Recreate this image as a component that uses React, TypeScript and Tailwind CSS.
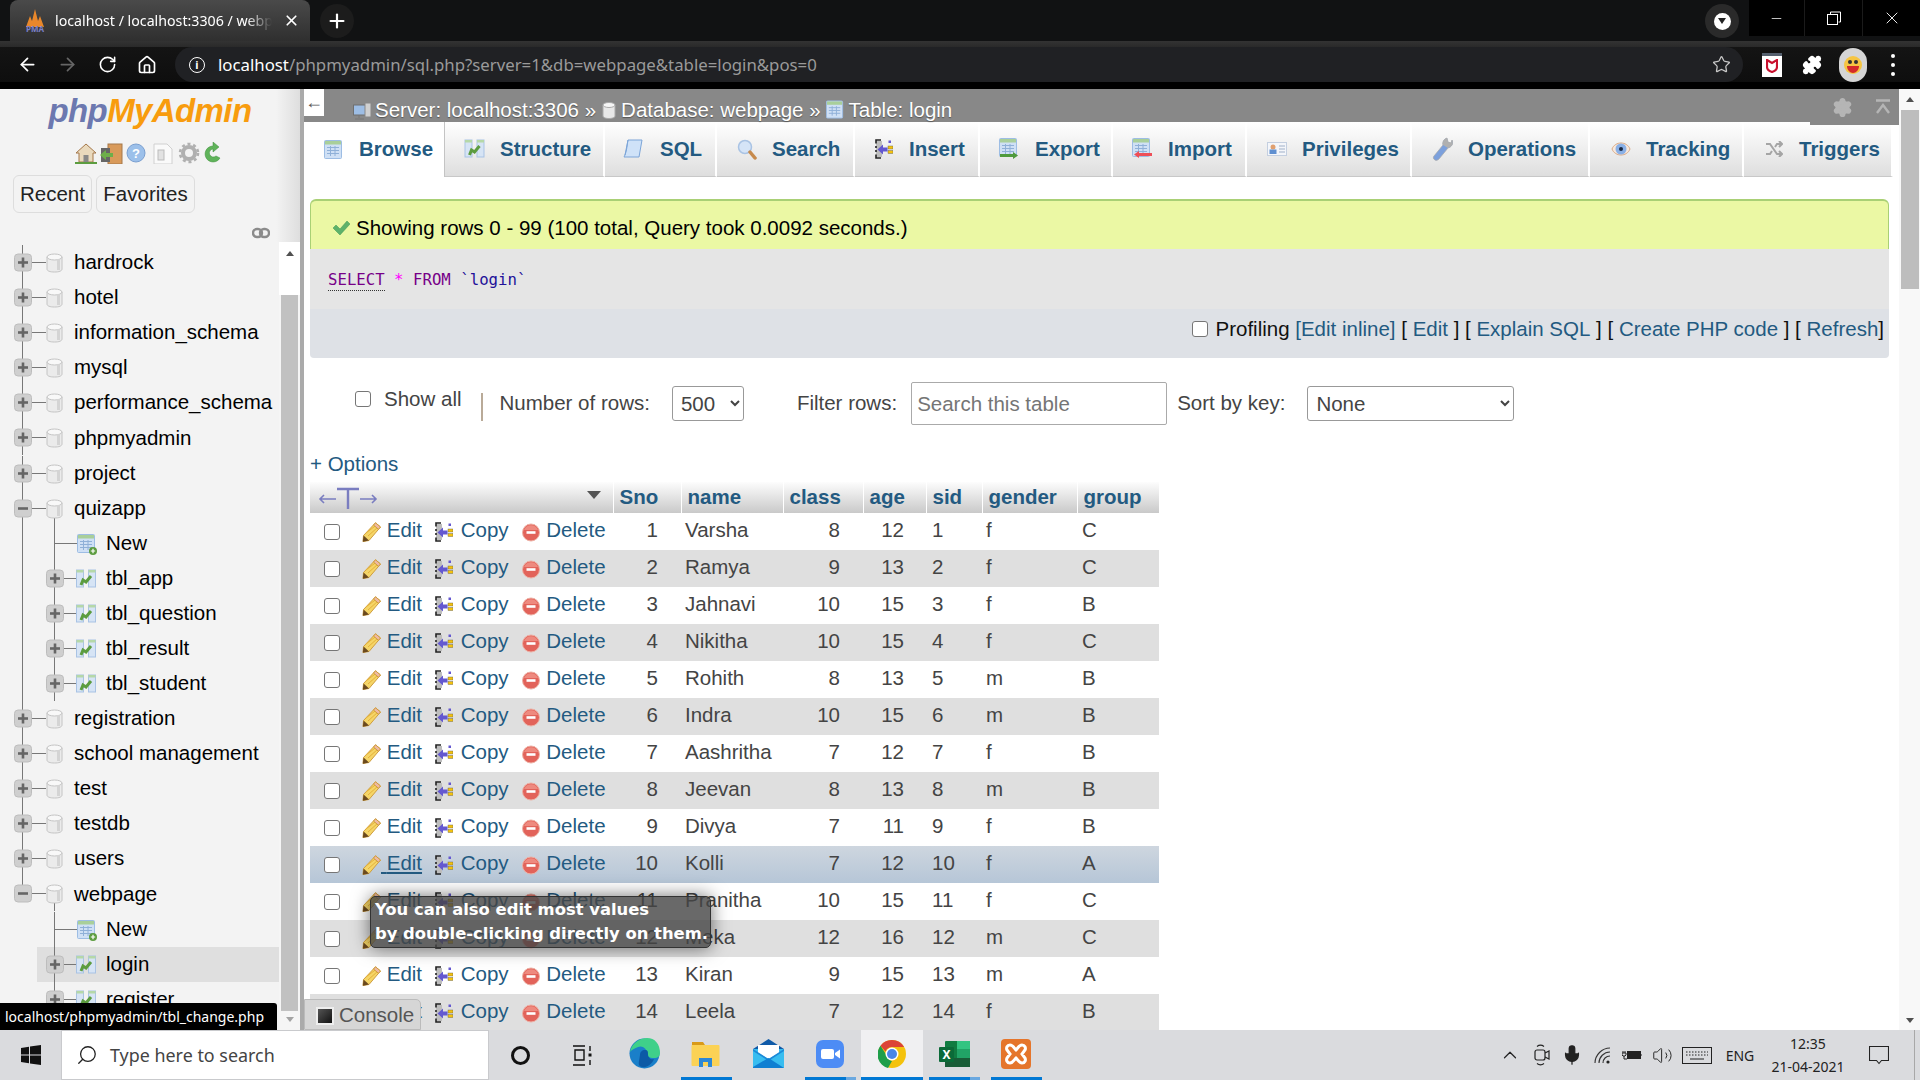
import React from 'react';
import { ArrowLeft, ArrowRight, RotateCw, House, Star, Plus, X, Minus, Search as SearchIcon, ChevronUp, Settings, Puzzle, Mic, Volume2 } from 'lucide-react';

const LINK = 'text-[#235a81]';

const TreeBox = ({ x, open }: { x: number; open?: boolean }) => (
  <g>
    <rect x={x + 0.5} y={9} width={17} height={17} rx={3.5} fill="#cfcfcf" stroke="#bdbdbd" />
    <rect x={x + 4} y={16.2} width={10} height={2.6} fill="#666" />
    {!open && <rect x={x + 7.7} y={12.5} width={2.6} height={10} fill="#666" />}
  </g>
);

const DbGlyph = ({ x }: { x: number }) => (
  <g>
    <path d={`M${x} 12v12c0 2 3 3 7.5 3s7.5-1 7.5-3V12z`} fill="#ebebeb" stroke="#c4c4c4" />
    <ellipse cx={x + 7.5} cy={12} rx={7.5} ry={3} fill="#f8f8f8" stroke="#c4c4c4" />
    <rect x={x + 10} y={14} width={3} height={11} fill="#d4d4d4" />
  </g>
);

const StructGlyph = ({ x, y = 8 }: { x: number; y?: number }) => (
  <g transform={`translate(${x} ${y})`}>
    <rect x={0.5} y={1} width={7} height={17} fill="#d6e4f5" stroke="#a9c3e4" />
    <rect x={12.5} y={1} width={7} height={17} fill="#d6e4f5" stroke="#a9c3e4" />
    <rect x={0.5} y={1} width={7} height={2.5} fill="#b5d8a8" />
    <rect x={12.5} y={1} width={7} height={2.5} fill="#b5d8a8" />
    <path d="M5 16l2-5 3 2 5-6" fill="none" stroke="#5c9c3f" strokeWidth={3} />
  </g>
);

const TableGlyph = ({ x, y = 8, badge }: { x: number; y?: number; badge?: string }) => (
  <g transform={`translate(${x} ${y})`}>
    <rect x={0.5} y={0.5} width={17} height={18} rx={1} fill="#cfe0f5" stroke="#9dbde4" />
    <rect x={1} y={1} width={16} height={3.5} fill="#a9cf9a" />
    <path d="M3 7.5h12M3 10.5h12M3 13.5h12M6.5 6v10M11 6v10" stroke="#8fb0d8" strokeWidth={1} />
    {badge === 'new' && (
      <g>
        <circle cx={16} cy={17} r={4} fill="#5c9c3f" />
        <path d="M13.8 17h4.4M16 14.8v4.4" stroke="#fff" strokeWidth={1.2} />
      </g>
    )}
    {badge === 'export' && <path d="M1 16h13v-2l5 3.5-5 3.5v-2H1z" fill="#4f9a3d" />}
    {badge === 'import' && <path d="M20 15H7v-2l-5 3.5 5 3.5v-2h13z" fill="#ee4f58" />}
  </g>
);

type Row = { label: string; depth: 0 | 1; kind?: 'new' | 'table'; open?: boolean; last?: boolean; outerDone?: boolean; selected?: boolean };

const treeRows: Row[] = [
  { label: 'hardrock', depth: 0 },
  { label: 'hotel', depth: 0 },
  { label: 'information_schema', depth: 0 },
  { label: 'mysql', depth: 0 },
  { label: 'performance_schema', depth: 0 },
  { label: 'phpmyadmin', depth: 0 },
  { label: 'project', depth: 0 },
  { label: 'quizapp', depth: 0, open: true },
  { label: 'New', depth: 1, kind: 'new' },
  { label: 'tbl_app', depth: 1, kind: 'table' },
  { label: 'tbl_question', depth: 1, kind: 'table' },
  { label: 'tbl_result', depth: 1, kind: 'table' },
  { label: 'tbl_student', depth: 1, kind: 'table' },
  { label: 'registration', depth: 0 },
  { label: 'school management', depth: 0 },
  { label: 'test', depth: 0 },
  { label: 'testdb', depth: 0 },
  { label: 'users', depth: 0 },
  { label: 'webpage', depth: 0, open: true, last: true },
  { label: 'New', depth: 1, kind: 'new', outerDone: true },
  { label: 'login', depth: 1, kind: 'table', outerDone: true, selected: true },
  { label: 'register', depth: 1, kind: 'table', outerDone: true },
];

const TreeRow = ({ row }: { row: Row }) => {
  const w = row.depth === 0 ? 74 : 106;
  return (
    <div className={`flex h-[35.08px] items-center text-[20.5px] text-black whitespace-nowrap shrink-0 ${row.selected ? 'bg-[linear-gradient(to_right,transparent_37px,#dfdfdf_37px)]' : ''}`}>
      <svg width={w} height={35} className="shrink-0">
        {row.depth === 0 ? (
          <g>
            <path d={`M22.5 0V${row.last ? 17 : 35}`} stroke="#777" />
            <path d="M32 17.5h14" stroke="#777" />
            {row.open && <path d="M54.5 25V35" stroke="#777" />}
            <TreeBox x={14} open={row.open} />
            <DbGlyph x={47} />
          </g>
        ) : (
          <g>
            {!row.outerDone && <path d="M22.5 0V35" stroke="#777" />}
            <path d="M54.5 0V35" stroke="#777" />
            <path d={row.kind === 'new' ? 'M54 17.5h23' : 'M64 17.5h12'} stroke="#777" />
            {row.kind === 'new' ? <TableGlyph x={77} badge="new" /> : <StructGlyph x={76} />}
            {row.kind === 'table' && <TreeBox x={46} />}
          </g>
        )}
      </svg>
      <span>{row.label}</span>
    </div>
  );
};

const Sidebar = () => (
  <div className="w-[300px] h-full flex flex-col bg-[#f3f3f3] shrink-0">
    <div className="h-[153px] shrink-0 bg-[linear-gradient(to_right,#f3f3f3_92%,#dedede)]">
      <div className="h-[42px] flex items-center justify-center font-bold italic text-[33px] leading-none tracking-[-0.6px]">
        <span className="text-[#6c78af]">php</span>
        <span className="text-[#f89c0e]">MyAdmin</span>
      </div>
      <div className="h-[22px] mt-[11px] flex items-center justify-center">
        <svg width={150} height={22} viewBox="0 0 150 22">
          <path d="M1 11L11 2l10 9h-3v9H4v-9z" fill="#e9d9bd" stroke="#a5784a" />
          <path d="M0 21h22" stroke="#5c9c3f" strokeWidth={2} />
          <rect x={8.5} y={13} width={5} height={7} fill="#888" />
          <rect x={33} y={2} width={14} height={20} fill="#d99a5a" stroke="#a5784a" />
          <rect x={26} y={6} width={9} height={14} fill="#666" />
          <path d="M25 13l6-5v3h7v4h-7v3z" fill="#6dae4a" />
          <circle cx={61} cy={11} r={9} fill="#9cc0ea" stroke="#7a9fd0" />
          <text x={61} y={16} textAnchor="middle" fontSize={13} fontWeight={700} fill="#fff">?</text>
          <path d="M79 2h13l5 5v15H79z" fill="#fafafa" stroke="#d0d0d0" />
          <rect x={83} y={8} width={6} height={10} fill="#e2e2e2" stroke="#bbb" />
          <g transform="translate(104 0)">
            <circle cx={10} cy={11} r={6} fill="none" stroke="#b0b0b0" strokeWidth={4} />
            <circle cx={10} cy={11} r={9} fill="none" stroke="#b0b0b0" strokeWidth={2.6} strokeDasharray="3 2.8" />
          </g>
          <path d="M138 4a8 8 0 1 0 7 12l-4-2a4 4 0 1 1-3-7v3l6-5-6-5z" fill="#5fb35a" stroke="#3e8f3b" strokeWidth={0.5} />
        </svg>
      </div>
      <div className="flex mt-[11px] ml-[13px] gap-[4px] text-[20.5px] text-[#222]">
        <div className="w-[79px] h-[38px] flex items-center justify-center border border-[#dddddd] rounded-[6px] pt-[1px]">Recent</div>
        <div className="w-[99px] h-[38px] flex items-center justify-center border border-[#dddddd] rounded-[6px] pt-[1px]">Favorites</div>
      </div>
      <div className="flex justify-end pr-[30px] mt-[14px]">
        <svg width={18} height={12} viewBox="0 0 18 12">
          <rect x={1} y={2} width={9} height={8} rx={4} fill="none" stroke="#8b8b8b" strokeWidth={2.4} />
          <rect x={8} y={2} width={9} height={8} rx={4} fill="none" stroke="#8b8b8b" strokeWidth={2.4} />
        </svg>
      </div>
    </div>
    <div className="flex-1 flex min-h-0">
      <div className="w-[279px] overflow-hidden pt-[3px] flex flex-col">
        {treeRows.map((r, i) => <TreeRow key={i} row={r} />)}
      </div>
      <div className="w-[21px] flex flex-col items-center bg-[#f5f5f5]">
        <div className="h-[53px] w-full bg-white flex justify-center pt-[9px] shrink-0">
          <div className="w-0 h-0 border-x-[4px] border-x-transparent border-b-[5px] border-b-[#505050]" />
        </div>
        <div className="w-[17px] h-[716px] bg-[#c1c1c1]" />
        <div className="w-0 h-0 border-x-[4px] border-x-transparent border-t-[5px] border-t-[#a3a3a3] mt-[6px]" />
      </div>
    </div>
  </div>
);

const CopyGlyph = ({ size = 20 }: { size?: number }) => (
  <svg width={size * 0.9} height={size} viewBox="0 0 18 20" className="shrink-0">
    <rect x={1} y={2} width={6} height={16} fill="#bdbdbd" />
    <path d="M6 1H1v3.500M1 7v2M1 11v2M1 15.500V19h5" fill="none" stroke="#222" strokeWidth={1.6} />
    <path d="M2.500 10.500L8 5.500V8.500h4.500v4H8v3z" fill="#6458d0" />
    <rect x={13.500} y={1.500} width={2.500} height={2.500} fill="#6458d0" />
    <rect x={13} y={7} width={5} height={3} fill="#f4c20d" stroke="#555" strokeWidth={0.4} />
    <rect x={13} y={11.500} width={5} height={3} fill="#f4c20d" stroke="#555" strokeWidth={0.4} />
  </svg>
);

const PencilGlyph = () => (
  <svg width={19} height={20} viewBox="0 0 19 20" className="shrink-0">
    <path d="M13.500 0.800l5 4.200L7 18.500 1 19.500 1.500 13.500z" fill="#f5d567" stroke="#cf9d3e" />
    <path d="M4 11L14.500 3M6 14L16 5" stroke="#e5b13a" strokeWidth={1} />
    <path d="M13.500 0.800l5 4.200-2 2.300-5-4.200z" fill="#efb9a2" stroke="#cf9d3e" />
    <path d="M0.800 19.800l0.800-6.300 5.400 5z" fill="#6b4a1f" />
  </svg>
);

const DeleteGlyph = () => (
  <svg width={18} height={20} viewBox="0 0 18 20" className="shrink-0">
    <circle cx={9} cy={10.500} r={8.500} fill="#e2635a" stroke="#edb0a4" />
    <path d="M2 8a7.500 7.500 0 0 1 14 0z" fill="#ee8a7f" />
    <rect x={4.500} y={9.200} width={9} height={2.600} fill="#fff" />
  </svg>
);

const TabIcon = ({ name }: { name: string }) => {
  switch (name) {
    case 'browse':
      return <svg width={20} height={20} viewBox="0 0 20 20"><TableGlyph x={1} y={0} /></svg>;
    case 'structure':
      return <svg width={22} height={20} viewBox="0 0 20 20"><StructGlyph x={0} y={0} /></svg>;
    case 'sql':
      return (
        <svg width={20} height={21} viewBox="0 0 20 21">
          <path d="M5 1h14l-3 17H1l1-2z" fill="#cfe2f8" stroke="#7ca5d8" />
          <path d="M5 1c-1 5-1 10-3 15" fill="none" stroke="#7ca5d8" />
        </svg>
      );
    case 'search':
      return (
        <svg width={20} height={21} viewBox="0 0 20 21">
          <circle cx={8} cy={8} r={6.5} fill="#d5e4f7" stroke="#a9c3e4" strokeWidth={1.5} />
          <path d="M13 13l5 6" stroke="#c78a4c" strokeWidth={3.5} strokeLinecap="round" />
        </svg>
      );
    case 'insert':
      return <CopyGlyph />;
    case 'export':
      return <svg width={22} height={22} viewBox="0 0 22 22"><TableGlyph x={1} y={0} badge="export" /></svg>;
    case 'import':
      return <svg width={22} height={22} viewBox="0 0 22 22"><TableGlyph x={1} y={0} badge="import" /></svg>;
    case 'privileges':
      return (
        <svg width={20} height={14} viewBox="0 0 20 14">
          <rect x={0.5} y={0.5} width={19} height={13} fill="#f4f6fa" stroke="#c4cfe0" />
          <circle cx={6} cy={5} r={2.5} fill="#e0a070" />
          <rect x={2.5} y={7.5} width={7} height={4.5} fill="#5f8fd0" />
          <path d="M12 4h6M12 7h6M12 10h6" stroke="#a0b0c8" />
        </svg>
      );
    case 'operations':
      return (
        <svg width={21} height={24} viewBox="0 0 21 24">
          <path d="M3 23c-2-1-2-3-1-4l9-11c-1-3 1-6 4-7l1 4 3 1 1-3c2 3 0 7-4 8l-9 11c-1 1-3 2-4 1z" fill="#7ca0dc" stroke="#a8a8a8" strokeWidth={0.7} />
          <path d="M11 8c-1-3 1-6 4-7l1 4 3 1 1-3c2 3 0 7-4 8z" fill="#b0b0b0" />
        </svg>
      );
    case 'tracking':
      return (
        <svg width={20} height={18} viewBox="0 0 20 18">
          <path d="M1 9c3-8 15-8 18 0-3 8-15 8-18 0z" fill="#f7e8dc" stroke="#d9a884" />
          <circle cx={10} cy={9} r={5.5} fill="#8ab0e6" />
          <circle cx={10} cy={9} r={2} fill="#1b2a44" />
        </svg>
      );
    default:
      return (
        <svg width={18} height={16} viewBox="0 0 18 16" fill="none" stroke="#a5a5a5" strokeWidth={2}>
          <path d="M1 3h4l7 10h5M1 13h4l2-3M10 6l2-3h5" />
          <path d="M14 0l3 3-3 3M14 10l3 3-3 3" />
        </svg>
      );
  }
};

const tabs = [
  { label: 'Browse', icon: 'browse', w: 'w-[135px] pl-[13px]', iw: 'w-[20px] mr-[16px]', active: true },
  { label: 'Structure', icon: 'structure', w: 'w-[160px] pl-[19px]', iw: 'w-[21px] mr-[15px]' },
  { label: 'SQL', icon: 'sql', w: 'w-[112px] pl-[15px]', iw: 'w-[25px] mr-[15px]' },
  { label: 'Search', icon: 'search', w: 'w-[138px] pl-[20px]', iw: 'w-[20px] mr-[15px]' },
  { label: 'Insert', icon: 'insert', w: 'w-[125px] pl-[19px]', iw: 'w-[20px] mr-[15px]' },
  { label: 'Export', icon: 'export', w: 'w-[133px] pl-[18px]', iw: 'w-[22px] mr-[15px]' },
  { label: 'Import', icon: 'import', w: 'w-[134px] pl-[18px]', iw: 'w-[22px] mr-[15px]' },
  { label: 'Privileges', icon: 'privileges', w: 'w-[165px] pl-[20px]', iw: 'w-[20px] mr-[15px]' },
  { label: 'Operations', icon: 'operations', w: 'w-[178px] pl-[20px]', iw: 'w-[21px] mr-[15px]' },
  { label: 'Tracking', icon: 'tracking', w: 'w-[154px] pl-[20px]', iw: 'w-[21px] mr-[15px]' },
  { label: 'Triggers', icon: 'triggers', w: 'w-[149px] pl-[19px]', iw: 'w-[21px] mr-[15px]' },
];

const rows = [
  [1, 'Varsha', 8, 12, 1, 'f', 'C'],
  [2, 'Ramya', 9, 13, 2, 'f', 'C'],
  [3, 'Jahnavi', 10, 15, 3, 'f', 'B'],
  [4, 'Nikitha', 10, 15, 4, 'f', 'C'],
  [5, 'Rohith', 8, 13, 5, 'm', 'B'],
  [6, 'Indra', 10, 15, 6, 'm', 'B'],
  [7, 'Aashritha', 7, 12, 7, 'f', 'B'],
  [8, 'Jeevan', 8, 13, 8, 'm', 'B'],
  [9, 'Divya', 7, 11, 9, 'f', 'B'],
  [10, 'Kolli', 7, 12, 10, 'f', 'A'],
  [11, 'Pranitha', 10, 15, 11, 'f', 'C'],
  [12, 'Meka', 12, 16, 12, 'm', 'C'],
  [13, 'Kiran', 9, 15, 13, 'm', 'A'],
  [14, 'Leela', 7, 12, 14, 'f', 'B'],
];

const headers = [
  { label: 'Sno', w: 'w-[68px]' },
  { label: 'name', w: 'w-[102px]' },
  { label: 'class', w: 'w-[80px]' },
  { label: 'age', w: 'w-[63px]' },
  { label: 'sid', w: 'w-[56px]' },
  { label: 'gender', w: 'w-[95px]' },
  { label: 'group', w: 'w-[82px]' },
];

const Checkbox = () => (
  <input type="checkbox" className="appearance-none w-[16px] h-[16px] shrink-0 bg-white border border-[#767676] rounded-[3px]" />
);

const DataTable = () => (
  <table className="table-fixed border-collapse w-[849px] text-[20.5px] text-[#444]">
    <thead>
      <tr className="h-[31px] bg-[linear-gradient(to_bottom,#fdfdfd,#c9c9c9)]">
        <th className="w-[303px] h-[31px] p-0 border-r border-white">
          <div className="flex h-[31px] items-center justify-between pl-[8px] pr-[12px]">
            <svg width={60} height={26} viewBox="0 0 60 26" fill="none" stroke="#7a7dc0" strokeWidth={1.6}>
              <path d="M2 14h16M6 10l-4 4 4 4M42 14h16M54 10l4 4-4 4" />
              <path d="M19 4h22M30 4v20" strokeWidth={2.4} />
            </svg>
            <div className="mb-[6px] w-0 h-0 border-x-[7px] border-x-transparent border-t-[8px] border-t-[#555]" />
          </div>
        </th>
        {headers.map(h => (
          <th key={h.label} className={`${h.w} h-[31px] p-0 pl-[6px] pb-[2px] leading-[24px] text-left font-bold ${LINK} border-r border-white`}>{h.label}</th>
        ))}
      </tr>
    </thead>
    <tbody>
      {rows.map((r, i) => {
        const hovered = r[0] === 10;
        const bg = hovered ? 'bg-[linear-gradient(to_bottom,#ced6df,#b6c6d7)]' : i % 2 === 1 ? 'bg-[#dfdfdf]' : 'bg-white';
        return (
          <tr key={i} className={`h-[37px] ${bg}`}>
            <td className="p-0">
              <div className="flex items-center pl-[14px] whitespace-nowrap">
                <Checkbox />
                <span className="ml-[22px]"><PencilGlyph /></span>
                <span className={`${LINK} mb-[2px] ${hovered ? 'underline' : ''}`}>{'\u00a0'}Edit</span>
                <span className="ml-[13px] mr-[2px]"><CopyGlyph /></span>
                <span className={`${LINK} mb-[2px]`}>{'\u00a0'}Copy</span>
                <span className="ml-[13px] mr-[1px]"><DeleteGlyph /></span>
                <span className={`${LINK} mb-[2px]`}>{'\u00a0'}Delete</span>
              </div>
            </td>
            <td className="p-0 pr-[23px] pb-[2px] text-right">{r[0]}</td>
            <td className="p-0 pl-[4px] pb-[2px]">{r[1]}</td>
            <td className="p-0 pr-[23px] pb-[2px] text-right">{r[2]}</td>
            <td className="p-0 pr-[22px] pb-[2px] text-right">{r[3]}</td>
            <td className="p-0 pl-[6px] pb-[2px]">{r[4]}</td>
            <td className="p-0 pl-[4px] pb-[2px]">{r[5]}</td>
            <td className="p-0 pl-[5px] pb-[2px]">{r[6]}</td>
          </tr>
        );
      })}
    </tbody>
  </table>
);

const Content = () => (
  <div className="flex-1 min-w-0 h-full bg-white flex flex-col overflow-hidden">
    <div className="relative h-[33px] shrink-0 bg-[#888888] flex text-white text-[20.5px] whitespace-nowrap">
      <div className="w-[20px] h-[27px] bg-white flex items-center justify-center text-[#555] text-[18px]">←</div>
      <div className="ml-[29px] flex items-center gap-[3px] pt-[9px] [text-shadow:0_1px_1px_#555]">
        <svg width={19} height={19} viewBox="0 0 19 19">
          <rect x={0.5} y={4} width={12} height={10} fill="#9dbde4" stroke="#6f6f6f" />
          <rect x={12} y={2} width={6} height={14} fill="#d0d0d0" stroke="#888" />
          <path d="M6 14v3M2 18h9" stroke="#777" />
        </svg>
        <span>Server: localhost:3306 »</span>
        <svg width={14} height={18} viewBox="0 0 14 18" className="ml-[3px]">
          <path d="M1 4v11c0 1.500 2.500 2.500 6 2.500s6-1 6-2.500V4z" fill="#e8e8e8" stroke="#aaa" />
          <ellipse cx={7} cy={4} rx={6} ry={2.500} fill="#f6f6f6" stroke="#aaa" />
        </svg>
        <span className="ml-[2px]">Database: webpage »</span>
        <svg width={19} height={20} viewBox="0 0 20 20" className="ml-[2px]"><TableGlyph x={0} y={0} /></svg>
        <span className="ml-[1px]">Table: login</span>
      </div>
      <div className="absolute right-0 top-0 w-[89px] h-[36px] bg-[#888888] flex items-center pl-[22px] gap-[21px] text-[#b5b5b5]">
        <Settings size={21} fill="#b5b5b5" stroke="#b5b5b5" />
        <svg width={18} height={18} viewBox="0 0 18 18" fill="none" stroke="#b5b5b5" strokeWidth={2.4}>
          <path d="M2 2.500h14M3 15l6-8 6 8" />
        </svg>
      </div>
    </div>
    <div className="h-[55px] shrink-0 flex pl-[6px]">
      {tabs.map(t => (
        <div
          key={t.label}
          className={`${t.w} h-full shrink-0 flex items-center font-bold text-[20.5px] ${LINK} whitespace-nowrap ${
            t.active
              ? 'bg-white border-r border-[#c4c4c4]'
              : 'bg-[linear-gradient(to_bottom,#ffffff,#dedede)] border-r-2 border-b border-r-white border-b-[#c8c8c8]'
          }`}
        >
          <div className={`${t.iw} shrink-0 flex justify-center`}><TabIcon name={t.icon} /></div>
          <span>{t.label}</span>
        </div>
      ))}
    </div>
    <div className="mt-[22px] ml-[6px] w-[1579px] shrink-0 text-[20.5px]">
      <div className="h-[50px] bg-[#ebf8a4] border-t-2 border-x border-[#a9d075] rounded-t-[6px] flex items-center pl-[21px] pt-[6px] text-black">
        <svg width={18} height={16} viewBox="0 0 18 16" className="mr-[6px]">
          <path d="M1 8l3-3 4 4 7-8 3 3-10 11z" fill="#5eb26b" stroke="#3c9a50" strokeWidth={0.5} />
        </svg>
        <span>Showing rows 0 - 99 (100 total, Query took 0.0092 seconds.)</span>
      </div>
      <div className="h-[60px] bg-[#e5e5e5] flex items-center pl-[18px] pt-[2px] font-['DejaVu_Sans_Mono',monospace] text-[15.7px] whitespace-pre">
        <span className="text-[#770088] border-b border-dotted border-[#333] leading-[20px]">SELECT</span>
        <span className="text-[#ff00ff]"> * </span>
        <span className="text-[#770088]">FROM </span>
        <span className="text-[#221199]">`login`</span>
      </div>
      <div className="h-[49px] bg-[#dee1e6] flex items-center justify-end pr-[5px] pb-[9px] text-[#111] whitespace-pre rounded-b-[4px]">
        <span className="w-[16px] h-[16px] mr-[7px] inline-flex"><Checkbox /></span>
        <span>Profiling </span>
        <span className={LINK}>[Edit inline]</span>
        <span> [ </span><span className={LINK}>Edit</span><span> ] [ </span>
        <span className={LINK}>Explain SQL</span><span> ] [ </span>
        <span className={LINK}>Create PHP code</span><span> ] [ </span>
        <span className={LINK}>Refresh</span><span>]</span>
      </div>
    </div>
    <div className="ml-[6px] h-[92px] shrink-0 text-[20.5px] text-[#444] whitespace-nowrap pt-[28px]">
      <div className="flex items-center h-[35px]">
        <span className="ml-[45px] mb-[9px] inline-flex"><Checkbox /></span>
        <span className="ml-[13px] mb-[9px]">Show all</span>
        <span className="ml-[19px] mt-[7px] w-[2px] h-[28px] bg-[#b9aa98]" />
        <span className="ml-[17px]">Number of rows:</span>
        <select defaultValue="500" className="ml-[22px] w-[72px] h-[35px] pl-[4px] bg-white border border-[#999] rounded-[3px] text-[#444]">
          <option>500</option>
        </select>
        <span className="ml-[53px]">Filter rows:</span>
        <input placeholder="Search this table" className="ml-[14px] w-[256px] h-[43px] px-[5px] bg-white border border-[#aaa] rounded-[2px] placeholder:text-[#757575]" />
        <span className="ml-[10px]">Sort by key:</span>
        <select defaultValue="None" className="ml-[22px] w-[207px] h-[35px] pl-[4px] bg-white border border-[#999] rounded-[3px] text-[#444]">
          <option>None</option>
        </select>
      </div>
    </div>
    <div className={`ml-[6px] h-[32px] shrink-0 flex items-center pb-[4px] text-[20.5px] ${LINK}`}>+ Options</div>
    <div className="ml-[6px] shrink-0"><DataTable /></div>
  </div>
);

const EdgeIcon = () => (
  <svg width={31} height={31} viewBox="0 0 31 31">
    <circle cx={15.5} cy={15.5} r={15} fill="#1a7fc9" />
    <path d="M1 14C3 4 12 0 18 0c8 0 13 6 13 15 0 3-2 5-6 5-5 0-7-2-7-4 0-6-5-9-9-7-4 2-7 3-8 5z" fill="#3fd08a" />
    <path d="M11 17c0-3 2-5 5-5 3 0 3 2 3 4 0 4 3 6 6 5-2 5-7 9-12 8-5-1-3-5-2-12z" fill="#0c5aa6" />
  </svg>
);

const FolderIcon = () => (
  <svg width={30} height={27} viewBox="0 0 30 27">
    <path d="M1 2h11l2 3H1z" fill="#d99a18" />
    <rect x={0.5} y={5} width={28} height={21} rx={1} fill="#fbd255" />
    <path d="M8 27v-9h13v9h-4v-5h-5v5z" fill="#2c87d6" />
  </svg>
);

const MailIcon = () => (
  <svg width={31} height={29} viewBox="0 0 31 29">
    <path d="M0 10L15.500 0 31 10z" fill="#0f5aa8" />
    <path d="M0 10h31v19H0z" fill="#38bdf0" />
    <path d="M5 6h21v8l-10.500 6L5 14z" fill="#fff" />
    <path d="M0 10l15.500 10L31 10v2L15.500 22 0 12z" fill="#1c8ad8" />
    <path d="M0 28l15.500-9L31 29H0z" fill="#0f7fd2" />
  </svg>
);

const ZoomIcon = () => (
  <svg width={28} height={28} viewBox="0 0 28 28">
    <rect width={28} height={28} rx={7} fill="#4d8cf5" />
    <rect x={5} y={9} width={13} height={10} rx={2} fill="#fff" />
    <path d="M19 13l5-3.500v9L19 15z" fill="#fff" />
  </svg>
);

const ChromeIcon = () => (
  <svg width={28} height={28} viewBox="0 0 28 28">
    <circle cx={14} cy={14} r={14} fill="#f4c20d" />
    <path d="M14 0a14 14 0 0 1 12.100 7H14a7 7 0 0 0-6.500 4.500L2.500 5.800A14 14 0 0 1 14 0z" fill="#dc4437" />
    <path d="M2.500 5.800l6 9.500A7 7 0 0 0 14 21l-4 7A14 14 0 0 1 2.500 5.800z" fill="#1e9e4a" />
    <circle cx={14} cy={14} r={6.500} fill="#fff" />
    <circle cx={14} cy={14} r={5} fill="#4a86e8" />
  </svg>
);

const ExcelIcon = () => (
  <svg width={31} height={28} viewBox="0 0 31 28">
    <rect x={6} y={1} width={25} height={26} rx={1} fill="#107c41" />
    <rect x={18} y={1} width={13} height={8} fill="#33c481" />
    <rect x={18} y={9} width={13} height={9} fill="#21a366" />
    <rect x={6} y={18} width={25} height={9} fill="#185c37" />
    <rect x={0} y={7} width={15} height={15} rx={1} fill="#0b6a38" />
    <text x={7.500} y={19} textAnchor="middle" fontSize={12} fontWeight={700} fill="#fff">X</text>
  </svg>
);

const XamppIcon = () => (
  <svg width={30} height={30} viewBox="0 0 30 30">
    <rect width={30} height={30} rx={4} fill="#e5752b" />
    <path d="M9 6c3 0 4 3 6 5 2-2 3-5 6-5 3 0 4 3 3 5l-3 4 3 4c1 2 0 5-3 5-3 0-4-3-6-5-2 2-3 5-6 5-3 0-4-3-3-5l3-4-3-4c-1-2 0-5 3-5z" fill="none" stroke="#fff" strokeWidth={3} />
  </svg>
);

const taskCells = [
  { key: 'edge', node: <EdgeIcon />, bar: '' },
  { key: 'folder', node: <FolderIcon />, bar: 'w-[51px] bg-[#0078d4]' },
  { key: 'mail', node: <MailIcon />, bar: '' },
  { key: 'zoom', node: <ZoomIcon />, bar: 'w-[51px] bg-[linear-gradient(to_right,#0078d4_80%,#6aa8e0_80%)]' },
  { key: 'chrome', node: <ChromeIcon />, bar: 'w-full bg-[#0078d4]', active: true },
  { key: 'excel', node: <ExcelIcon />, bar: 'w-[51px] bg-[linear-gradient(to_right,#0078d4_80%,#6aa8e0_80%)]' },
  { key: 'xampp', node: <XamppIcon />, bar: 'w-[51px] bg-[#0078d4]' },
];

const Taskbar = () => (
  <div className="h-[50px] shrink-0 bg-[#dadbde] flex font-['Noto_Sans',sans-serif] text-[#222]">
    <div className="w-[61px] flex items-center justify-center">
      <svg width={20} height={20} viewBox="0 0 20 20" fill="#111">
        <path d="M0 3l8-1.200V9.500H0zM9 1.600L20 0v9.500H9zM0 10.500h8v7.700L0 17zM9 10.500h11V20L9 18.400z" />
      </svg>
    </div>
    <div className="w-[428px] bg-white border border-[#c9cacd] flex items-center pl-[14px] text-[#444] text-[17.9px]">
      <SearchIcon size={22} strokeWidth={1.4} className="-scale-x-100 text-[#222]" />
      <span className="ml-[12px]">Type here to search</span>
    </div>
    <div className="w-[62px] flex items-center justify-center">
      <div className="w-[19px] h-[19px] rounded-full border-[3px] border-[#111]" />
    </div>
    <div className="w-[62px] flex items-center justify-center">
      <svg width={21} height={21} viewBox="0 0 21 21" fill="none" stroke="#111" strokeWidth={1.4}>
        <path d="M1 1h12M1 20h12M3 5h9v10H3zM18 1v5M18 15v5" />
        <rect x={16.500} y={8.500} width={3} height={3} fill="#111" stroke="none" />
      </svg>
    </div>
    {taskCells.map(c => (
      <div key={c.key} className={`w-[62px] flex flex-col items-center ${c.active ? 'bg-[#f0f0f2]' : ''}`}>
        <div className="flex-1 flex items-center justify-center">{c.node}</div>
        <div className={`h-[3px] ${c.bar}`} />
      </div>
    ))}
    <div className="flex-1" />
    <div className="w-[32px] flex items-center justify-center"><ChevronUp size={22} strokeWidth={1.3} /></div>
    <div className="w-[32px] flex items-center justify-center">
      <svg width={16} height={22} viewBox="0 0 16 22" fill="none" stroke="#222" strokeWidth={1.2}>
        <rect x={1} y={6} width={10} height={10} rx={2} />
        <path d="M11 9l4-2v8l-4-2M3 2.500c2-1.500 5-1.500 7 0M3 19.500c2 1.500 5 1.500 7 0" />
      </svg>
    </div>
    <div className="w-[28px] flex items-center justify-center"><Mic size={22} strokeWidth={1.4} fill="#222" /></div>
    <div className="w-[32px] flex items-center justify-center">
      <svg width={17} height={17} viewBox="0 0 17 17" fill="none" stroke="#333" strokeWidth={1.1}>
        <path d="M1 16C1 8 8 1 16 1M5 16c0-6 5-11 11-11M9 16c0-4 3-7 7-7" />
        <circle cx={14} cy={15} r={1.600} fill="#222" stroke="none" />
      </svg>
    </div>
    <div className="w-[28px] flex items-center justify-center">
      <svg width={20} height={14} viewBox="0 0 20 14" fill="none" stroke="#222">
        <rect x={5.500} y={3.500} width={13} height={7} fill="#222" />
        <path d="M19 6v2M1 3v2M3 3v2M0 5h4v2l-1 1H1L0 7zM2 8v3h3" />
      </svg>
    </div>
    <div className="w-[32px] flex items-center justify-center"><Volume2 size={21} strokeWidth={1.1} /></div>
    <div className="w-[38px] flex items-center justify-center">
      <svg width={30} height={17} viewBox="0 0 30 17" fill="none" stroke="#222">
        <rect x={0.5} y={0.5} width={29} height={16} />
        <path d="M4 5h22M4 8h22" strokeDasharray="1.500 1.500" />
        <path d="M8 12h14" />
      </svg>
    </div>
    <div className="w-[48px] flex items-center justify-center text-[14px]">ENG</div>
    <div className="w-[88px] flex flex-col items-center justify-center text-[14px] leading-[23px]">
      <span>12:35</span>
      <span>21-04-2021</span>
    </div>
    <div className="w-[54px] flex items-center justify-center">
      <svg width={20} height={19} viewBox="0 0 20 19" fill="none" stroke="#222" strokeWidth={1.1}>
        <path d="M0.500 0.500h19v14h-7l-2.500 3-2.500-3h-7z" />
      </svg>
    </div>
    <div className="w-[14px] flex"><div className="ml-[8px] w-px h-full bg-[#a8a8a8]" /></div>
  </div>
);

const BrowserChrome = () => (
  <div className="h-[89px] shrink-0 bg-[#000] flex flex-col text-white font-['Noto_Sans',sans-serif]">
    <div className="h-[41px] flex bg-[#111213]">
      <div className="ml-[10px] w-[300px] h-full rounded-t-[8px] bg-[linear-gradient(to_bottom,#4a4a4a,#2f2f2f)] flex items-center pl-[15px]">
        <svg width={20} height={24} viewBox="0 0 20 24" className="shrink-0">
          <path d="M1 18L5 7l2 5 3-12 3 12 2-5 4 11z" fill="#e8872b" />
          <text x={10} y={23} textAnchor="middle" fontSize={8} fontWeight={700} fill="#7a80c8">PMA</text>
        </svg>
        <span className="ml-[10px] w-[217px] overflow-hidden whitespace-nowrap text-[14.2px] [mask-image:linear-gradient(to_right,black_88%,transparent)]">localhost / localhost:3306 / webpage</span>
        <X size={17} strokeWidth={2.4} className="ml-[11px] shrink-0" />
      </div>
      <div className="ml-[10px] mt-[4px] w-[34px] h-[34px] rounded-full bg-[#1c1c1c] flex items-center justify-center">
        <Plus size={22} strokeWidth={2.4} />
      </div>
      <div className="flex-1" />
      <div className="mt-[4px] mr-[10px] w-[34px] h-[34px] rounded-full bg-[#2a2a2a] flex items-center justify-center">
        <div className="w-[17px] h-[17px] rounded-full bg-white flex items-center justify-center">
          <div className="w-0 h-0 border-x-[4px] border-x-transparent border-t-[6px] border-t-[#222]" />
        </div>
      </div>
      <div className="w-[56px] h-[36px] bg-black flex items-center justify-center border-r border-[#1b1b1b]"><Minus size={15} strokeWidth={1.2} /></div>
      <div className="w-[58px] h-[36px] bg-black flex items-center justify-center border-r border-[#1b1b1b]">
        <svg width={14} height={14} viewBox="0 0 14 14" fill="none" stroke="#fff">
          <path d="M3.500 3V1h10v10h-2" /><rect x={0.5} y={3.500} width={10} height={10} />
        </svg>
      </div>
      <div className="w-[57px] h-[36px] bg-black flex items-center justify-center"><X size={20} strokeWidth={1.1} /></div>
    </div>
    <div className="h-[41px] bg-[linear-gradient(to_bottom,#333333_0,#2a2a2a_6px,#141414_6px,#0e0e0e)] flex items-end">
      <div className="w-[175px] h-[35px] flex items-center shrink-0">
        <div className="w-[47px] pl-[7px] flex justify-center"><ArrowLeft size={21} strokeWidth={2} /></div>
        <div className="w-[40px] flex justify-center"><ArrowRight size={21} strokeWidth={2} className="text-[#666]" /></div>
        <div className="w-[40px] flex justify-center"><RotateCw size={19} strokeWidth={2} /></div>
        <div className="w-[40px] flex justify-center"><House size={20} strokeWidth={2} /></div>
      </div>
      <div className="w-[1568px] h-[35px] rounded-full bg-[#202124] flex items-center pl-[14px] pr-[12px]">
        <div className="w-[16px] h-[16px] rounded-full border-[1.5px] border-white flex items-center justify-center text-[11px] font-bold leading-none">i</div>
        <div className="ml-[13px] text-[16.8px] whitespace-nowrap">
          <span className="text-white">localhost</span>
          <span className="text-[#9a9a9a]">/phpmyadmin/sql.php?server=1&amp;db=webpage&amp;table=login&amp;pos=0</span>
        </div>
        <div className="flex-1" />
        <Star size={19} strokeWidth={1.6} className="text-[#c8c8c8]" />
      </div>
      <div className="flex-1 h-[35px] flex items-center pl-[19px]">
        <div className="w-[20px] h-[24px] bg-white flex items-center justify-center border-t-[3px] border-[#55606e]">
          <svg width={12} height={14} viewBox="0 0 12 14" fill="none" stroke="#c8102e" strokeWidth={2.2}>
            <path d="M1 1l5 3 5-3v7c0 2-2 4-5 5-3-1-5-3-5-5z" />
          </svg>
        </div>
        <Puzzle size={20} fill="#fff" className="ml-[20px]" />
        <div className="ml-[17px] w-[28px] h-[34px] rounded-full bg-[#d5d5d5] flex items-center justify-center">
          <svg width={18} height={18} viewBox="0 0 18 18">
            <circle cx={9} cy={9} r={9} fill="#f6c542" />
            <circle cx={6} cy={6} r={2} fill="#333" />
            <circle cx={12} cy={6} r={2} fill="#333" />
            <path d="M3 10h12c0 4-3 7-6 7s-6-3-6-7z" fill="#d42a2a" />
          </svg>
        </div>
        <div className="ml-[24px] flex flex-col gap-[5px]">
          <div className="w-[4px] h-[4px] rounded-full bg-white" />
          <div className="w-[4px] h-[4px] rounded-full bg-white" />
          <div className="w-[4px] h-[4px] rounded-full bg-white" />
        </div>
      </div>
    </div>
    <div className="h-[7px]" />
  </div>
);

export default function App() {
  return (
    <div className="relative w-[1920px] h-[1080px] overflow-hidden flex flex-col bg-white font-['Liberation_Sans',Arial,sans-serif]">
      <BrowserChrome />
      <div className="flex-1 flex min-h-0">
        <Sidebar />
        <div className="w-[4px] h-full bg-[#aaaaaa] shrink-0" />
        <Content />
        <div className="w-[21px] h-full shrink-0 flex flex-col items-center bg-[#f8f8f8]">
          <div className="h-[21px] flex items-center">
            <div className="w-0 h-0 border-x-[4px] border-x-transparent border-b-[5px] border-b-[#505050]" />
          </div>
          <div className="w-[18px] h-[179px] bg-[#bdbdbd]" />
          <div className="flex-1" />
          <div className="h-[20px] flex items-center">
            <div className="w-0 h-0 border-x-[4px] border-x-transparent border-t-[5px] border-t-[#505050]" />
          </div>
        </div>
      </div>
      <Taskbar />

      {/* overlays */}
      <div className="absolute left-[370px] top-[896px] w-[341px] h-[52px] bg-[#444]/80 border border-[#333] rounded-[5px] shadow-[0_0_18px_rgba(0,0,0,0.55)] pl-[4px] pt-[1px] text-white font-bold font-['DejaVu_Sans',sans-serif] text-[16.4px] leading-[24px] whitespace-nowrap">
        <div>You can also edit most values</div>
        <div>by double-clicking directly on them.</div>
      </div>
      <div className="absolute left-[304px] top-[999px] w-[117px] h-[31px] bg-[#d6d6d6] border border-[#bbb] rounded-tr-[5px] flex items-center pl-[11px] pt-[2px] text-[20.5px] text-[#555]">
        <div className="w-[18px] h-[18px] bg-[linear-gradient(135deg,#555,#111)] border-2 border-[#eee]" />
        <span className="ml-[5px]">Console</span>
      </div>
      <div className="absolute left-0 top-[1003px] w-[277px] h-[27px] bg-black rounded-tr-[3px] flex items-center pl-[5px] text-white text-[14px] font-['Noto_Sans',sans-serif] whitespace-nowrap">
        localhost/phpmyadmin/tbl_change.php
      </div>
    </div>
  );
}
